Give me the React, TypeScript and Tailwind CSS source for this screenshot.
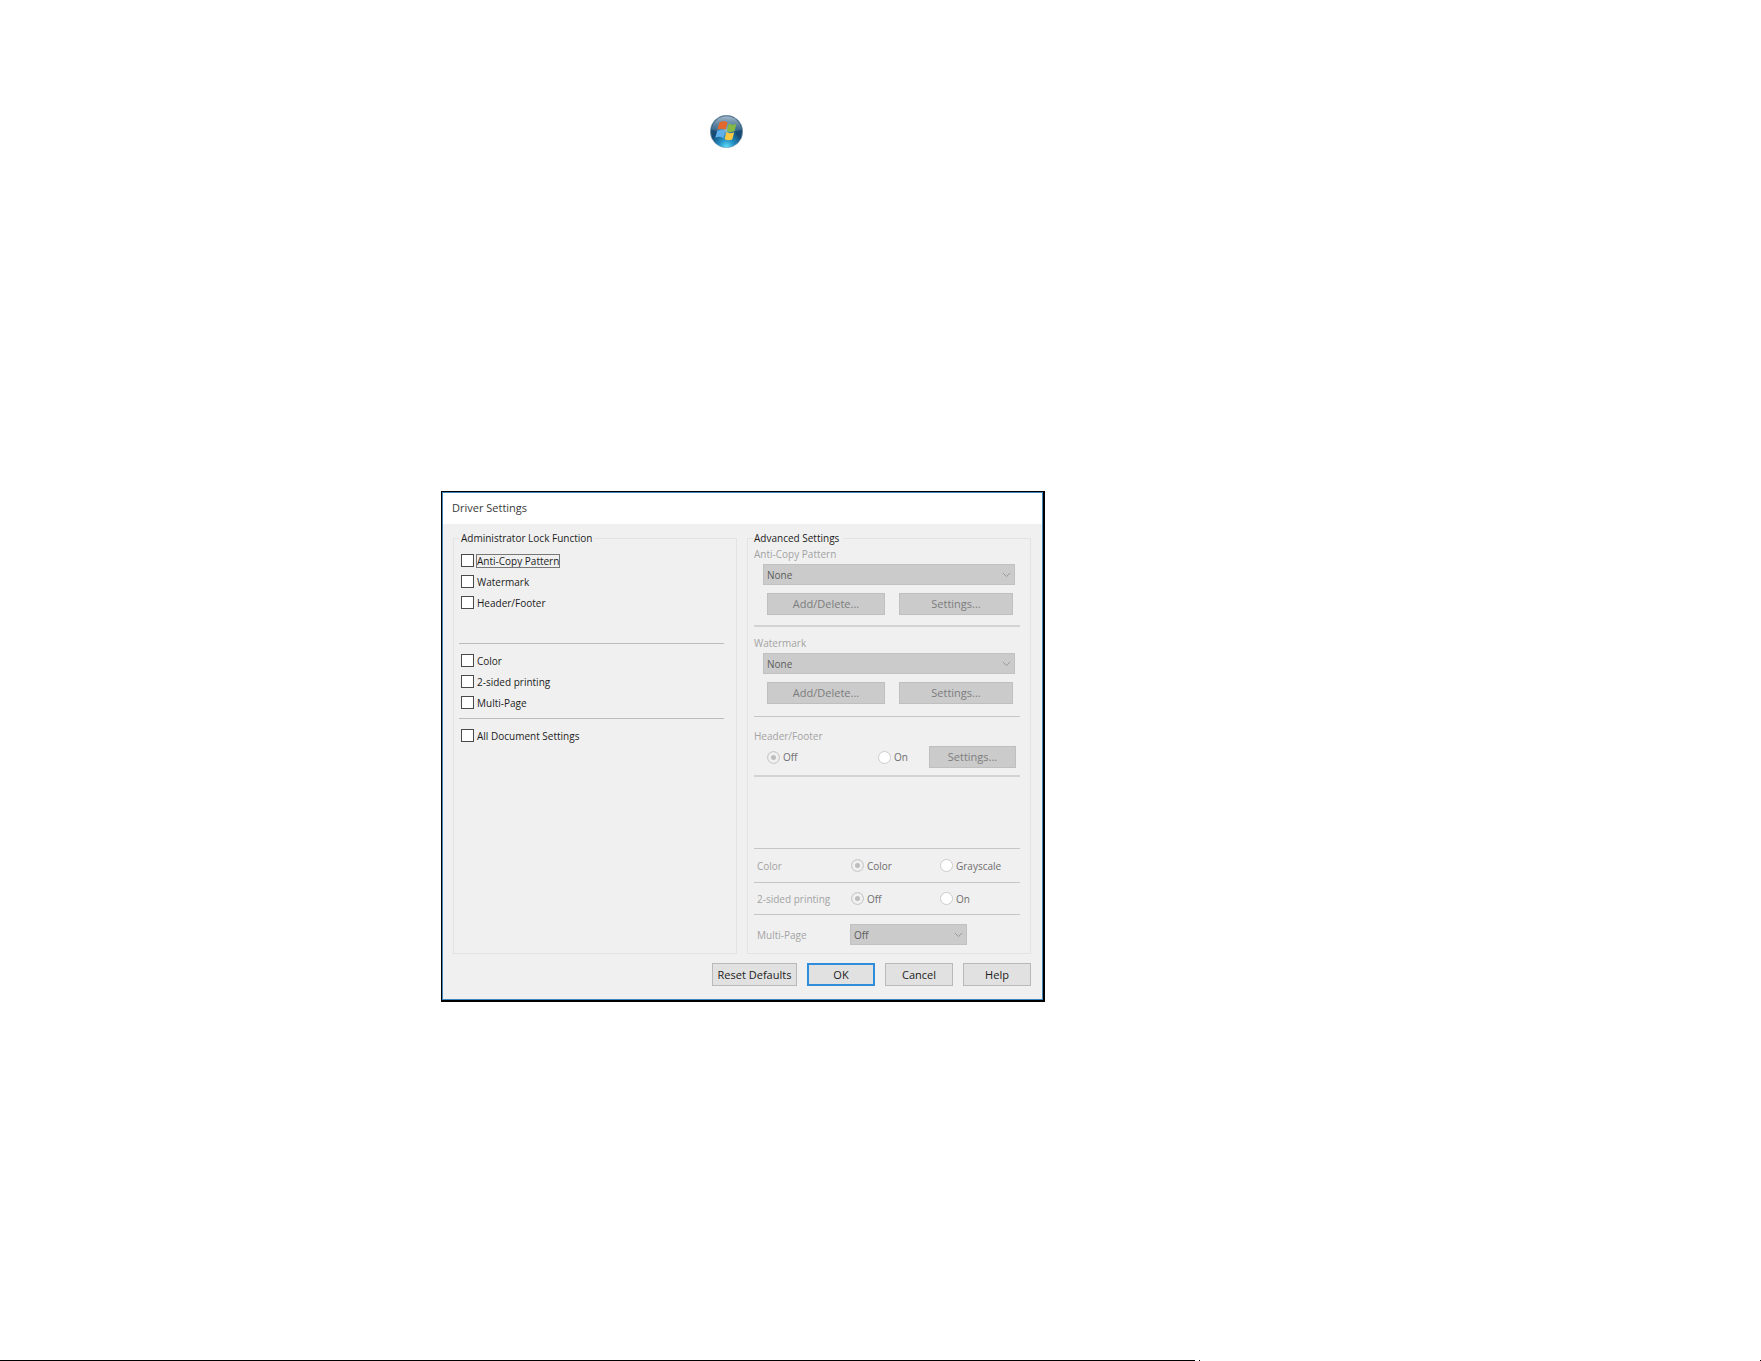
import { useState } from "react";

const lockGroups = [
  ["Anti-Copy Pattern", "Watermark", "Header/Footer"],
  ["Color", "2-sided printing", "Multi-Page"],
  ["All Document Settings"],
];

function StartOrb() {
  return (
    <svg viewBox="0 0 33 33" className="h-[33px] w-[33px]" role="img" aria-label="Start">
      <defs>
        <radialGradient id="orb" cx="0.5" cy="0.98" r="0.95">
          <stop offset="0" stopColor="#5fe0fb" />
          <stop offset="0.25" stopColor="#2490c4" />
          <stop offset="0.55" stopColor="#154a74" />
          <stop offset="1" stopColor="#2f5879" />
        </radialGradient>
        <linearGradient id="gloss" x1="0" y1="0" x2="0" y2="1">
          <stop offset="0" stopColor="#b4c6d3" stopOpacity="0.9" />
          <stop offset="1" stopColor="#5d8bad" stopOpacity="0.35" />
        </linearGradient>
        <radialGradient id="glow">
          <stop offset="0" stopColor="#bfe6f5" stopOpacity="0.7" />
          <stop offset="1" stopColor="#4aa0cc" stopOpacity="0" />
        </radialGradient>
      </defs>
      <circle cx="16.5" cy="16.5" r="16.2" fill="url(#orb)" stroke="#7f9aae" strokeWidth="0.6" />
      <path d="M1.500 14.500C2.500 6.500 9 1.200 16.500 1.200S30.500 6.500 31.500 14.500C25 17.500 8 17.500 1.500 14.500Z" fill="url(#gloss)" />
      <circle cx="16" cy="15.500" r="11" fill="url(#glow)" />
      <path d="M9.400 7.600c2.800-1.800 5.500-1.700 8.200 0l-2 7.200c-2.600-1.500-5.300-1.500-8.200-.2z" fill="#e2682c" />
      <path d="M18.800 8.500c2.500 1.500 5 1.600 7.700.3l-2 7.300c-2.600 1.300-5.200 1.200-7.700-.3z" fill="#86b944" />
      <path d="M7.200 15.900c2.800-1.300 5.400-1.200 8 .3l-1.900 6.800c-2.600-1.500-5.200-1.500-8-.2z" fill="#5fb0ec" />
      <path d="M16.500 17c2.500 1.500 5 1.600 7.700.3l-1.900 6.900c-2.600 1.400-5.200 1.300-7.700-.3z" fill="#fbca42" />
    </svg>
  );
}

function LockCheckbox({ label, focused }: { label: string; focused?: boolean }) {
  const [checked, setChecked] = useState(false);

  return (
    <label className="flex h-[21px] items-center gap-[3px] pl-[2px] text-[#1c1c1c]">
      <input
        type="checkbox"
        checked={checked}
        onChange={(e) => setChecked(e.target.checked)}
        className="h-[13px] w-[13px] appearance-none border border-[#4a4a4a] bg-white checked:bg-[#4a4a4a]"
      />
      <span className={focused ? "leading-3 outline outline-1 outline-[#777777]" : "leading-3"}>{label}</span>
    </label>
  );
}

function DisabledSelect({ label, value, className }: { label: string; value: string; className: string }) {
  return (
    <div className={`relative h-[21px] ${className}`}>
      <select
        aria-label={label}
        disabled
        className="block h-full w-full appearance-none border border-[#c1c1c1] bg-[#cbcbcb] pl-[3px] text-[10px] text-[#5c5c5c] opacity-100"
      >
        <option>{value}</option>
      </select>
      <svg viewBox="0 0 9 6" className="absolute top-2 right-1 h-[6px] w-[9px]" fill="none" stroke="#9a9a9a">
        <path d="M0.800 0.800L4.500 4.600L8.200 0.800" />
      </svg>
    </div>
  );
}

function DisabledButton({ children, className }: { children: string; className: string }) {
  return (
    <button
      type="button"
      disabled
      className={`h-[22px] border border-[#bfbfbf] bg-[#cbcbcb] text-[11px] text-[#7d7d7d] ${className}`}
    >
      {children}
    </button>
  );
}

function DisabledRadio({ name, label, checked, className }: { name: string; label: string; checked?: boolean; className?: string }) {
  return (
    <label className={`flex items-center gap-[3px] text-[#6e6e6e] ${className ?? ""}`}>
      <input
        type="radio"
        name={name}
        disabled
        defaultChecked={checked}
        className="h-[13px] w-[13px] appearance-none rounded-full border border-[#cccccc] bg-white checked:bg-[#bdbdbd] checked:shadow-[inset_0_0_0_3px_#f0f0f0]"
      />
      {label}
    </label>
  );
}

function PatternSection({ title }: { title: string }) {
  return (
    <>
      <p className="h-[14px] text-[#a3a3a3]">{title}</p>
      <DisabledSelect label={title} value="None" className="mt-[3px] mr-[5px] ml-[9px]" />
      <div className="mt-2 mr-[7px] ml-[13px] flex justify-between">
        <DisabledButton className="w-[118px]">Add/Delete...</DisabledButton>
        <DisabledButton className="w-[114px]">Settings...</DisabledButton>
      </div>
    </>
  );
}

const footerButton = "h-[23px] w-[68px] border border-[#b9b9b9] bg-[#e1e1e1] text-[#1c1c1c]";

function DriverSettings() {
  return (
    <div
      role="dialog"
      aria-labelledby="dialog-title"
      className="w-full max-w-[604px] border-t border-r-2 border-b-2 border-l border-black"
    >
      <div className="border border-[#3f86bd] bg-[#f0f0f0] text-[10px] leading-[14px]">
        <h1 id="dialog-title" className="h-[31px] bg-white pl-[9px] text-[11px] leading-[29px] text-[#3a3a3a]">
          Driver Settings
        </h1>
        <div className="grid grid-cols-2 gap-[10px] pt-[7px] pr-[11px] pl-[10px]">
          <fieldset className="min-w-0 border border-[#e3e3e3] px-[5px]">
            <legend className="px-[2px] text-[#1c1c1c]">Administrator Lock Function</legend>
            <div className="mr-[7px] pt-[5px]">
              {lockGroups[0].map((label, i) => (
                <LockCheckbox key={label} label={label} focused={i === 0} />
              ))}
              <hr className="mt-[30px] mb-[6px] border-[#bcbcbc]" />
              {lockGroups[1].map((label) => (
                <LockCheckbox key={label} label={label} />
              ))}
              <hr className="mt-[5px] mb-[6px] border-[#bcbcbc]" />
              {lockGroups[2].map((label) => (
                <LockCheckbox key={label} label={label} />
              ))}
            </div>
          </fieldset>

          <fieldset className="min-w-0 border border-[#e3e3e3] pr-[10px] pb-2 pl-[6px]">
            <legend className="pr-1 text-[#1c1c1c]">Advanced Settings</legend>
            <div className="pt-[2px]">
              <PatternSection title="Anti-Copy Pattern" />
              <hr className="mt-[10px] mb-[9px] border-t-2 border-[#d3d3d3]" />
              <PatternSection title="Watermark" />
              <hr className="mt-3 mb-3 border-[#c6c6c6]" />
              <p className="h-[14px] text-[#a3a3a3]">Header/Footer</p>
              <div className="mt-[3px] mr-[4px] ml-[13px] flex">
                <DisabledRadio name="headerFooter" label="Off" checked className="w-[111px]" />
                <DisabledRadio name="headerFooter" label="On" />
                <DisabledButton className="ml-auto w-[87px]">Settings...</DisabledButton>
              </div>
              <hr className="mt-[7px] border-t-2 border-[#d3d3d3]" />

              <div className="mt-[71px] grid grid-cols-[94px_89px_1fr] items-center border-t border-[#c6c6c6] pl-[3px]">
                <span className="flex h-[33px] items-center text-[#a3a3a3]">Color</span>
                <DisabledRadio name="color" label="Color" checked />
                <DisabledRadio name="color" label="Grayscale" />
              </div>
              <div className="grid grid-cols-[94px_89px_1fr] items-center border-t border-[#c6c6c6] pl-[3px]">
                <span className="flex h-[31px] items-center text-[#a3a3a3]">2-sided printing</span>
                <DisabledRadio name="duplex" label="Off" checked />
                <DisabledRadio name="duplex" label="On" />
              </div>
              <div className="flex border-t border-[#c6c6c6] pt-[9px] pl-[3px]">
                <span className="flex w-[93px] items-center text-[#a3a3a3]">Multi-Page</span>
                <DisabledSelect label="Multi-Page" value="Off" className="w-[117px]" />
              </div>
            </div>
          </fieldset>
        </div>
        <div className="flex justify-end gap-[10px] pt-[9px] pr-[11px] pb-[13px] pl-[10px] text-[11px]">
          <button type="button" className="h-[23px] w-[85px] border border-[#b9b9b9] bg-[#e1e1e1] text-[#1c1c1c]">
            Reset Defaults
          </button>
          <button type="button" className="h-[23px] w-[68px] border-2 border-[#2f8ddb] bg-[#e1e1e1] text-[#1c1c1c]">
            OK
          </button>
          <button type="button" className={footerButton}>
            Cancel
          </button>
          <button type="button" className={footerButton}>
            Help
          </button>
        </div>
      </div>
    </div>
  );
}

export default function App() {
  return (
    <main className="flex min-h-screen flex-col bg-white font-['Open_Sans',sans-serif]">
      <div className="pt-[115px] pl-[710px]">
        <StartOrb />
      </div>
      <div className="pt-[343px] pl-[441px]">
        <DriverSettings />
      </div>
      <div className="mt-auto flex h-px">
        <div className="flex-1 bg-black" />
        <div className="ml-1 w-px bg-black" />
        <div className="ml-[560px] w-px bg-black" />
      </div>
    </main>
  );
}
